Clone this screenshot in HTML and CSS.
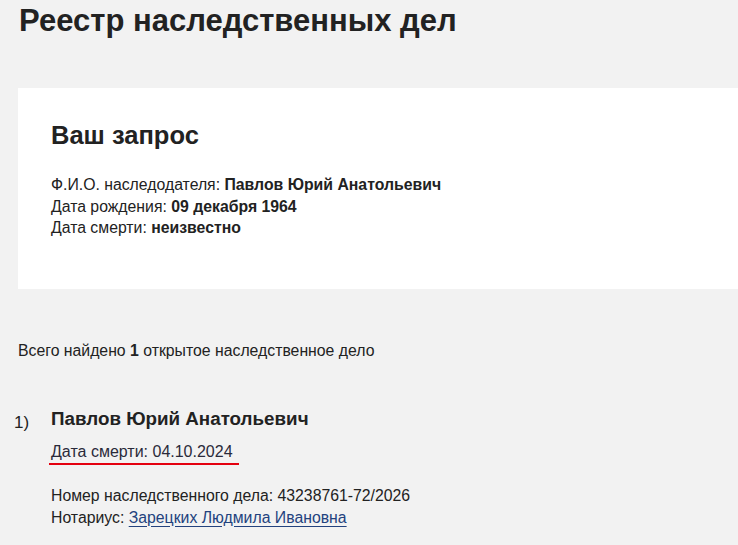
FILE: index.html
```html
<!DOCTYPE html>
<html lang="ru">
<head>
    <meta charset="UTF-8">
    <meta name="viewport" content="width=device-width, initial-scale=1.0">
    <title>Реестр наследственных дел</title>
    <link rel="stylesheet" href="styles.css">
</head>
<body>
    <div class="page">
        <h1 class="page-title">Реестр наследственных дел</h1>

        <div class="request">
            <h2>Ваш запрос</h2>
            <p>Ф.И.О. наследодателя: <b>Павлов Юрий Анатольевич</b></p>
            <p>Дата рождения: <b>09 декабря 1964</b></p>
            <p>Дата смерти: <b>неизвестно</b></p>
        </div>

        <p class="found">Всего найдено <b>1</b> открытое наследственное дело</p>

        <div class="case">
            <div class="case-num">1)</div>
            <div class="case-body">
                <h3>Павлов Юрий Анатольевич</h3>
                <span class="death-date">Дата смерти: 04.10.2024</span>
                <p>Номер наследственного дела: 43238761-72/2026</p>
                <p>Нотариус: <a href="#">Зарецких Людмила Ивановна</a></p>
            </div>
        </div>
    </div>
</body>
</html>
```

FILE: styles.css
```css
body {
    margin: 0;
    background-color: #f2f2f2;
    font-family: "Liberation Sans", Arial, sans-serif;
    color: #222;
    overflow: hidden;
}

.page {
    padding-left: 18px;
}

.page-title {
    margin: 0;
    padding: 3px 0 0 1px;
    font-size: 31px;
    line-height: 36px;
    font-weight: bold;
    color: #222;
}

.request {
    margin-top: 49px;
    margin-right: -40px;
    background: white;
    min-height: 169px;
    padding: 32px 0 0 33px;
}

.request h2 {
    margin: 0 0 24px;
    font-size: 25.5px;
    line-height: 30px;
    font-weight: bold;
}

.request p {
    margin: 0;
    font-size: 15.8px;
    line-height: 21.5px;
}

.found {
    margin: 52px 0 0;
    font-size: 15.8px;
    line-height: 20px;
}

.case {
    display: flex;
    margin-top: 46px;
}

.case-num {
    width: 37px;
    margin-left: -4px;
    padding-top: 5px;
    font-size: 17px;
    line-height: 22px;
}

.case-body h3 {
    margin: 0 0 11px;
    font-size: 18.8px;
    line-height: 24px;
}

.case-body p {
    margin: 0;
    font-size: 15.8px;
    line-height: 21.5px;
}

.death-date {
    display: inline-block;
    margin-left: -2px;
    margin-bottom: 20px;
    padding: 0 6px 1px 2px;
    border-bottom: 2px solid #e4000f;
    font-size: 16px;
    line-height: 20px;
    color: #2a2a3a;
}

.case-body a {
    color: #23427e;
    text-decoration: underline;
    text-underline-offset: 3px;
}
```
